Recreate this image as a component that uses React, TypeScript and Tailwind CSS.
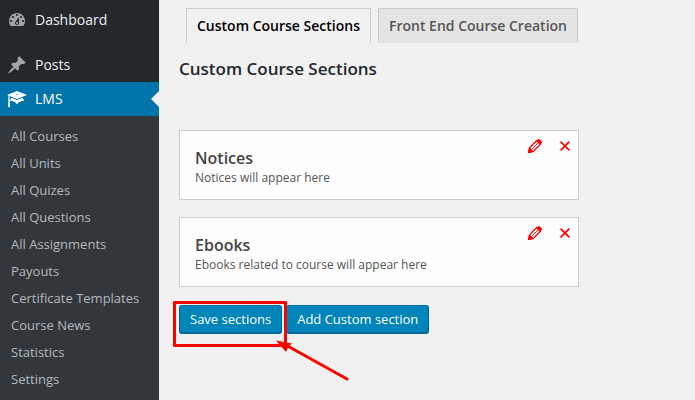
import { useState } from 'react'

const DashboardIcon = () => (
    <svg viewBox="0 0 20 20" className="h-5 w-5 shrink-0 fill-[#a0a5aa]" aria-hidden="true">
        <path d="M3.76 16h12.48c1.1-1.37 1.76-3.11 1.76-5 0-4.42-3.58-8-8-8s-8 3.58-8 8c0 1.89.66 3.63 1.76 5zM10 4c.55 0 1 .45 1 1s-.45 1-1 1-1-.45-1-1 .45-1 1-1zM6 6c.55 0 1 .45 1 1s-.45 1-1 1-1-.45-1-1 .45-1 1-1zm8 0c.55 0 1 .45 1 1s-.45 1-1 1-1-.45-1-1 .45-1 1-1zm-5.37 5.55L12 7v6c0 1.1-.9 2-2 2s-2-.9-2-2c0-.57.24-1.08.63-1.45zM4 10c.55 0 1 .45 1 1s-.45 1-1 1-1-.45-1-1 .45-1 1-1zm12 0c.55 0 1 .45 1 1s-.45 1-1 1-1-.45-1-1 .45-1 1-1zm-5 3c0-.55-.45-1-1-1s-1 .45-1 1 .45 1 1 1 1-.45 1-1z" />
    </svg>
)

const PostsIcon = () => (
    <svg viewBox="0 0 20 20" className="h-5 w-5 shrink-0 fill-[#a0a5aa]" aria-hidden="true">
        <path d="M10.44 3.02l1.82-1.82 6.36 6.35-1.83 1.82c-1.05-.68-2.48-.57-3.41.36l-.75.75c-.92.93-1.04 2.35-.35 3.41l-1.83 1.82-2.41-2.41-2.8 2.79c-.42.42-3.38 2.71-3.8 2.29s1.86-3.39 2.28-3.81l2.79-2.79L4.1 9.36l1.83-1.82c1.05.69 2.48.57 3.4-.36l.75-.75c.93-.92 1.05-2.35.36-3.41z" />
    </svg>
)

const LearnIcon = () => (
    <svg viewBox="0 0 20 20" className="h-5 w-5 shrink-0 fill-white" aria-hidden="true">
        <path d="M10 10L2.54 7.02 3 18H1l.48-11.41L0 6l10-4 10 4zm0-5c-.55 0-1 .22-1 .5s.45.5 1 .5 1-.22 1-.5-.45-.5-1-.5zm0 6l5.57-2.23c.71.94 1.2 2.07 1.36 3.3-.3-.04-.61-.07-.93-.07-2.55 0-4.78 1.37-6 3.41C8.78 13.37 6.55 12 4 12c-.32 0-.63.03-.93.07.16-1.23.65-2.36 1.36-3.3z" />
    </svg>
)

const PencilIcon = () => (
    <svg viewBox="0 0 14 14" className="h-3.5 w-3.5" fill="none" stroke="#f00" aria-hidden="true">
        <path d="M9 1.3 1.6 8.7.6 13.4 5.3 12.4 12.7 5" strokeWidth="1.3" />
        <path d="M8 2 9.8.4Q11 -.4 12 .6L13.4 2Q14.4 3 13.6 4.200L12 6Z" fill="#f00" stroke="none" />
        <path d="M1.300 8 6 12.700 0 14Z" fill="#f00" stroke="none" />
        <path d="M4 10 10.400 3.600" strokeWidth=".9" />
    </svg>
)

const CrossIcon = () => (
    <svg viewBox="0 0 10 10" className="h-2.5 w-2.5" fill="none" stroke="#f00" strokeWidth="1.7" aria-hidden="true">
        <path d="M.6.6 9.4 9.4M9.4.6.6 9.4" />
    </svg>
)

const submenu = [
    'All Courses',
    'All Units',
    'All Quizes',
    'All Questions',
    'All Assignments',
    'Payouts',
    'Certificate Templates',
    'Course News',
    'Statistics',
    'Settings',
]

const tabs = ['Custom Course Sections', 'Front End Course Creation']

const sections = [
    { title: 'Notices', text: 'Notices will appear here' },
    { title: 'Ebooks', text: 'Ebooks related to course will appear here' },
]

const buttonClass =
    'h-7 rounded-[3px] border border-[#006799] border-t-[#0073aa] bg-[#0085ba] px-2.5 text-[13px] leading-none text-white shadow-[0_1px_0_#006799]'

const Sidebar = () => (
    <nav className="flex w-[159px] shrink-0 flex-col bg-[#23282d] pt-[3px] text-sm text-[#eee]">
        <a href="#dashboard" className="mb-[11px] flex h-[34px] items-center gap-2 pl-[7px]">
            <DashboardIcon />
            Dashboard
        </a>
        <a href="#posts" className="flex h-[34px] items-center gap-2 pl-[7px]">
            <PostsIcon />
            Posts
        </a>
        <a href="#lms" className="relative flex h-[34px] items-center gap-2 bg-[#0073aa] pl-[7px] text-white">
            <LearnIcon />
            LMS
            <span className="absolute top-1/2 right-0 -translate-y-1/2 border-8 border-transparent border-r-[#f1f1f1]" />
        </a>
        <ul className="grow bg-[#32373c] py-[7px] text-[13px] text-[#b4b9be]">
            {submenu.map(item => (
                <li key={item}>
                    <a href="#lms" className="flex h-[27px] items-center pl-[11px] whitespace-nowrap">
                        {item}
                    </a>
                </li>
            ))}
        </ul>
    </nav>
)

const App = () => {
    const [active, setActive] = useState(tabs[0])

    return (
        <div className="flex min-h-screen bg-[#f1f1f1] font-['Open_Sans',sans-serif]">
            <Sidebar />

            <main className="min-w-0 grow px-5 pt-2">
                <div className="flex gap-[7px] pl-[7px]" role="tablist">
                    {tabs.map(tab => (
                        <button
                            key={tab}
                            role="tab"
                            aria-selected={active === tab}
                            onClick={() => setActive(tab)}
                            className={`h-[35px] border border-b-0 border-[#ccc] px-2.5 text-sm font-semibold whitespace-nowrap ${
                                active === tab ? 'bg-[#f1f1f1] text-black' : 'bg-[#e4e4e4] text-[#555]'
                            }`}>
                            {tab}
                        </button>
                    ))}
                </div>

                <h1 className="mt-3.5 text-[17px] leading-6 font-semibold text-[#23282d]">Custom Course Sections</h1>

                <ul className="mt-[49px] max-w-[400px] space-y-[17px]">
                    {sections.map(section => (
                        <li
                            key={section.title}
                            className="flex min-h-[70px] items-start justify-between border border-[#ccc] bg-[#fefefe] pt-2 pr-2 pl-[15px]">
                            <div className="pt-[9px]">
                                <h2 className="text-base leading-5 font-semibold text-[#444]">{section.title}</h2>
                                <p className="text-xs leading-5 text-[#555]">{section.text}</p>
                            </div>
                            <div className="flex items-center gap-[18px]">
                                <button className="flex" aria-label={`Edit ${section.title}`}>
                                    <PencilIcon />
                                </button>
                                <button className="flex" aria-label={`Remove ${section.title}`}>
                                    <CrossIcon />
                                </button>
                            </div>
                        </li>
                    ))}
                </ul>

                <div className="mt-[18px] flex gap-1">
                    <div className="relative">
                        <button className={buttonClass}>Save sections</button>
                        <span className="pointer-events-none absolute -top-1 -right-[5px] -left-[6px] h-[46px] rounded-[1px] border-3 border-[#f00]" />
                        <svg
                            viewBox="0 0 74 44"
                            className="pointer-events-none absolute top-[34px] left-[97px] h-11 w-[74px]"
                            aria-hidden="true">
                            <path d="M8 5 71 40" stroke="#f00" strokeWidth="3" strokeLinecap="round" />
                            <path d="M0 1.500 16 4.500 12.500 7.500 10 13Z" fill="#f00" />
                        </svg>
                    </div>
                    <button className={buttonClass}>Add Custom section</button>
                </div>
            </main>
        </div>
    )
}

export default App
